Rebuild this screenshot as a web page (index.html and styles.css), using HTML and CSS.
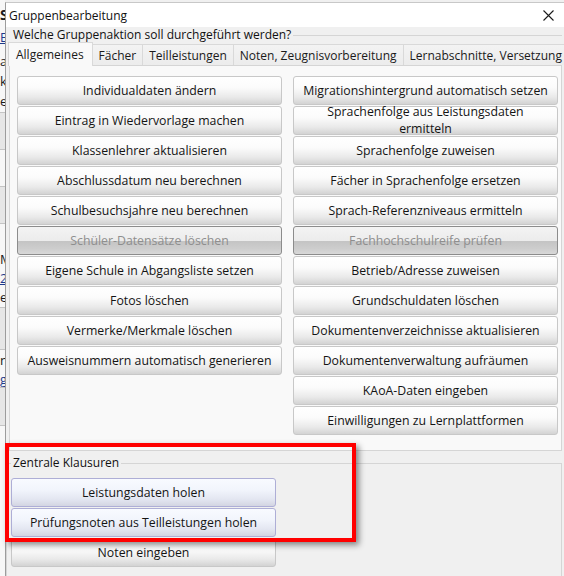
FILE: index.html
```html
<!DOCTYPE html>
<html lang="de">
<head>
    <meta charset="UTF-8">
    <title>Gruppenbearbeitung</title>
    <link rel="stylesheet" href="styles.css">
</head>
<body>
    <div class="screen">
        <!-- main window behind the dialog, only its edge shows -->
        <div class="behind">
            <div class="brow bold">S</div>
            <div class="brow link">E</div>
            <div class="brow">a</div>
            <div class="brow">k</div>
            <div class="brow line">e</div>
            <div class="brow band line"></div>
            <div class="brow line"></div>
            <div class="brow band line"></div>
            <div class="brow"></div>
            <div class="brow">M</div>
            <div class="brow link">2</div>
            <div class="brow line">e</div>
            <div class="brow band line"></div>
            <div class="brow">n</div>
            <div class="brow link line">g</div>
            <div class="brow band line"></div>
        </div>

        <div class="dialog">
            <div class="titlebar">
                <span>Gruppenbearbeitung</span>
                <svg class="close" width="11" height="11" viewBox="0 0 11 11">
                    <path d="M0.5 0.5 L10.5 10.5 M10.5 0.5 L0.5 10.5" stroke="#1a1a1a" stroke-width="1.1" fill="none"/>
                </svg>
            </div>

            <div class="group-title">
                <span>Welche Gruppenaktion soll durchgeführt werden?</span>
                <span class="rule"></span>
            </div>

            <div class="tabs">
                <div class="tab active">Allgemeines</div>
                <div class="tab">Fächer</div>
                <div class="tab">Teilleistungen</div>
                <div class="tab">Noten, Zeugnisvorbereitung</div>
                <div class="tab">Lernabschnitte, Versetzung</div>
            </div>

            <div class="tabpanel">
                <div class="col">
                    <button class="btn">Individualdaten ändern</button>
                    <button class="btn">Eintrag in Wiedervorlage machen</button>
                    <button class="btn">Klassenlehrer aktualisieren</button>
                    <button class="btn">Abschlussdatum neu berechnen</button>
                    <button class="btn">Schulbesuchsjahre neu berechnen</button>
                    <button class="btn" disabled>Schüler-Datensätze löschen</button>
                    <button class="btn">Eigene Schule in Abgangsliste setzen</button>
                    <button class="btn">Fotos löschen</button>
                    <button class="btn">Vermerke/Merkmale löschen</button>
                    <button class="btn">Ausweisnummern automatisch generieren</button>
                </div>
                <div class="col">
                    <button class="btn">Migrationshintergrund automatisch setzen</button>
                    <button class="btn">Sprachenfolge aus Leistungsdaten ermitteln</button>
                    <button class="btn">Sprachenfolge zuweisen</button>
                    <button class="btn">Fächer in Sprachenfolge ersetzen</button>
                    <button class="btn">Sprach-Referenzniveaus ermitteln</button>
                    <button class="btn" disabled>Fachhochschulreife prüfen</button>
                    <button class="btn">Betrieb/Adresse zuweisen</button>
                    <button class="btn">Grundschuldaten löschen</button>
                    <button class="btn">Dokumentenverzeichnisse aktualisieren</button>
                    <button class="btn">Dokumentenverwaltung aufräumen</button>
                    <button class="btn">KAoA-Daten eingeben</button>
                    <button class="btn">Einwilligungen zu Lernplattformen</button>
                </div>
            </div>

            <fieldset class="klausuren">
                <legend>Zentrale Klausuren</legend>
                <div class="col">
                    <button class="btn zk">Leistungsdaten holen</button>
                    <button class="btn zk">Prüfungsnoten aus Teilleistungen holen</button>
                    <button class="btn">Noten eingeben</button>
                </div>
            </fieldset>
        </div>
    </div>

    <!-- red highlight frame drawn over the dialog -->
    <div class="highlight"></div>
</body>
</html>
```

FILE: styles.css
```css
body {
    margin: 0;
    width: 564px;
    height: 576px;
    overflow: hidden;
    background: #f0f0f0;
    font-family: "Open Sans", "Noto Sans", sans-serif;
    font-size: 12px;
    color: #1a1a1a;
    position: relative;
}

.screen {
    display: flex;
    height: 576px;
    overflow: hidden;
}

/* window behind */
.behind {
    flex: none;
    width: 5px;
    overflow: hidden;
    background: #f7f7f7;
    padding-top: 4px;
}

.brow {
    display: flex;
    align-items: center;
    height: 20px;
    font-size: 13px;
    white-space: nowrap;
    box-sizing: border-box;
}

.brow:nth-child(2) { height: 26px; }
.brow:nth-child(3) { height: 22px; }
.brow:nth-child(4),
.brow:nth-child(11),
.brow:nth-child(15) { height: 18px; }
.brow:nth-child(5) { height: 23px; }
.brow:nth-child(6),
.brow:nth-child(7),
.brow:nth-child(8) { height: 37px; }
.brow:nth-child(9) { height: 25px; }
.brow:nth-child(12) { height: 21px; }
.brow:nth-child(13) { height: 42px; }
.brow:nth-child(16) { height: 38px; }

.brow.bold {
    font-weight: bold;
    font-size: 14px;
}

.brow.link {
    color: #1c3a8c;
    text-decoration: underline;
}

.brow.line {
    border-bottom: 1px solid #c4c4c4;
}

.brow.band {
    background: #e6e6e6;
}

/* dialog */
.dialog {
    flex: 1;
    margin-top: 2px;
    border-left: 1px solid #9c9c9c;
    border-top: 1px solid #c8c8c8;
    background: #f0f0f0;
    min-width: 0;
    overflow: hidden;
}

.titlebar {
    height: 24px;
    background: #fff;
    display: flex;
    align-items: center;
    justify-content: space-between;
    padding: 0 10px 0 3px;
    font-size: 12px;
    color: #111;
}

.close {
    display: block;
}

.group-title {
    display: flex;
    align-items: center;
    height: 16px;
    padding: 0 2px 0 7px;
    line-height: 16px;
    color: #111;
}

.group-title .rule {
    flex: 1;
    height: 1px;
    margin-left: 2px;
    background: #d5d5d5;
}

/* tab strip */
.tabs {
    display: flex;
    align-items: flex-end;
    height: 22px;
    margin-left: 2px;
}

.tab {
    height: 20px;
    line-height: 21px;
    padding: 0 6px;
    border: 1px solid #d9d9d9;
    border-left: none;
    border-bottom: none;
    background: linear-gradient(#f3f3f3, #ececec);
    white-space: nowrap;
}

.tab.active {
    height: 23px;
    line-height: 23px;
    padding: 0 8px 0 7px;
    border-left: 1px solid #d5d5d5;
    background: #f9f9f9;
    position: relative;
    z-index: 1;
    margin-bottom: -1px;
}

.tabpanel {
    display: flex;
    gap: 11px;
    height: 374px;
    margin: 0 2px 0 3px;
    padding: 10px 0 0 7px;
    border: 1px solid #d5d5d5;
    background: #f9f9f9;
}

.col {
    display: flex;
    flex-direction: column;
    gap: 1px;
    width: 265px;
}

/* buttons */
.btn {
    height: 29px;
    padding: 0 7px 1px;
    font-family: inherit;
    font-size: 12.3px;
    line-height: 17px;
    color: #141414;
    border: 1px solid #c8c8c8;
    border-radius: 3px;
    background: linear-gradient(#ffffff 0%, #fbfbfb 40%, #e9e9e9 75%, #d3d3d3 100%);
    display: flex;
    align-items: center;
    justify-content: center;
    text-align: center;
}

.btn:disabled {
    color: #8e8e8e;
    border-color: #8c8c8c;
    background: linear-gradient(#f3f3f3 0%, #ececec 50%, #c4c4c4 52%, #cdcdcd 80%, #d8d8d8 100%);
}

.btn.zk {
    border-color: #aeaed6;
    background: linear-gradient(#f8faff 0%, #f2f5fc 40%, #e3e6f1 75%, #d3d5e2 100%);
}

/* Zentrale Klausuren */
.klausuren {
    margin: 4px 2px 0 0;
    padding: 7px 4px 40px 4px;
    border: 1px solid #d5d5d5;
    min-width: 0;
}

.klausuren legend {
    padding: 0 2px;
    line-height: 16px;
    color: #111;
}

.highlight {
    position: absolute;
    left: 5px;
    top: 443px;
    width: 343px;
    height: 91px;
    border: 4px solid #ff0000;
    box-shadow: 3px 3px 6px rgba(0, 0, 0, 0.45);
}
```
